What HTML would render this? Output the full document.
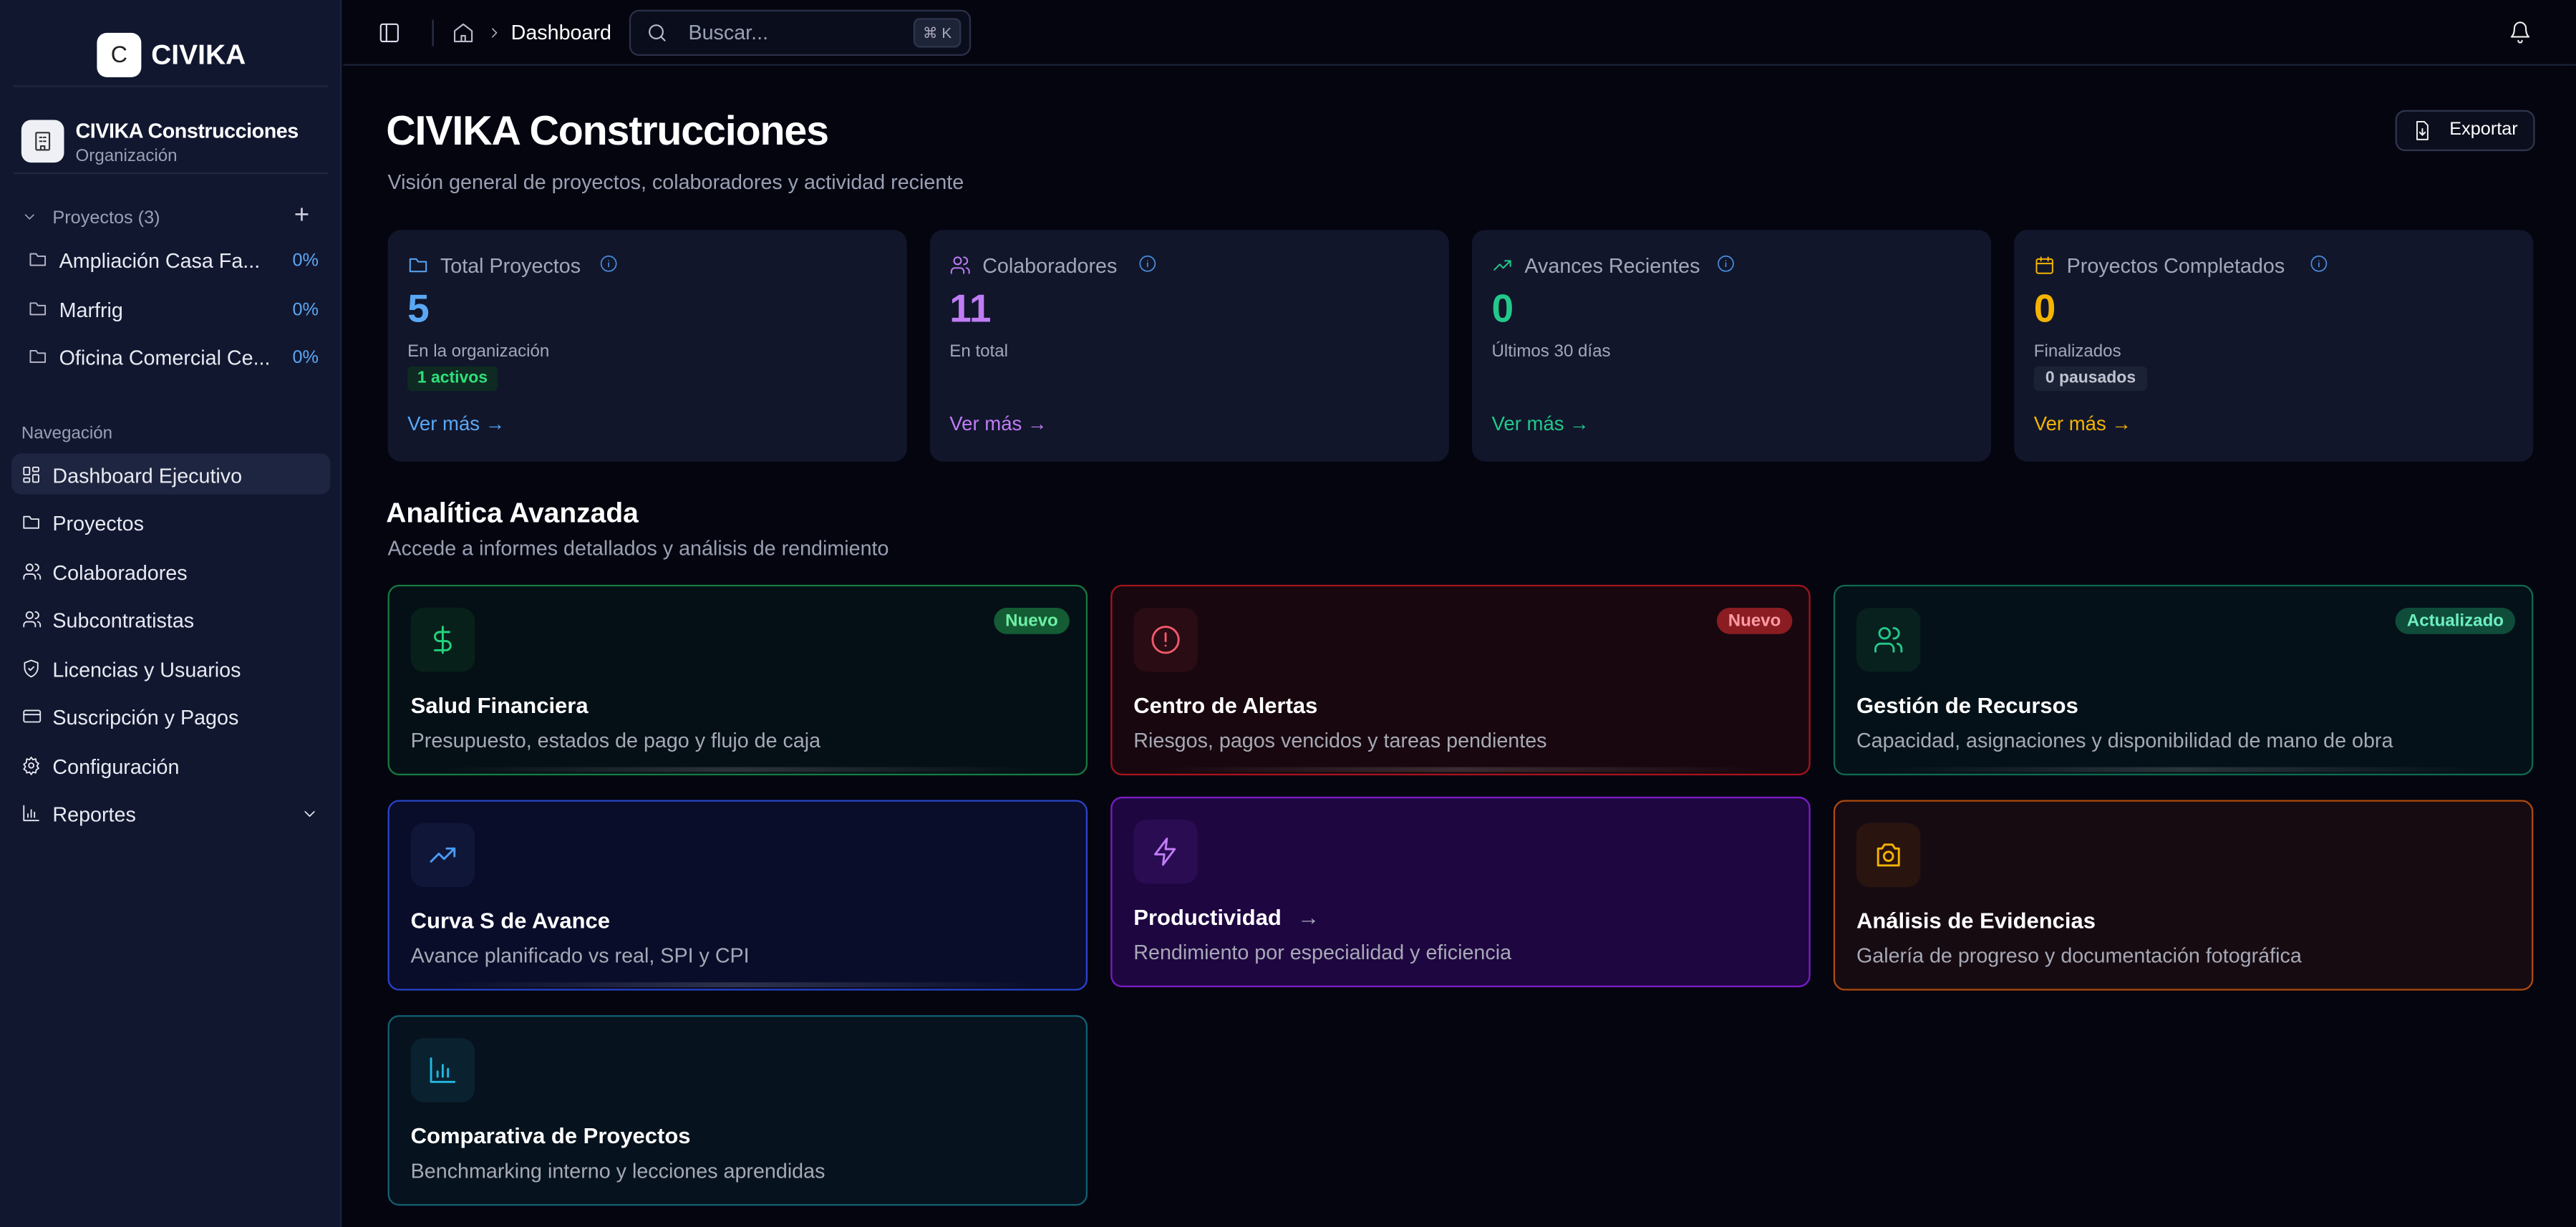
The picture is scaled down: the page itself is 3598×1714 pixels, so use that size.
<!DOCTYPE html>
<html><head><meta charset="utf-8">
<style>
*{box-sizing:border-box;margin:0;padding:0}
html,body{width:3598px;height:1714px;overflow:hidden;background:#04050f}
#w{position:absolute;left:0;top:0;width:1568px;height:747px;transform:scale(2.29464);transform-origin:0 0;font-family:"Liberation Sans",sans-serif;color:#fff;background:#04050f}
.a{position:absolute;white-space:nowrap}
svg{position:absolute;fill:none;stroke-width:1.6;stroke-linecap:round;stroke-linejoin:round}
#sb{position:absolute;left:0;top:0;width:208px;height:747px;background:#121730;border-right:1px solid #1d2340}
.g{color:#9aa0b4}
.sc{position:absolute;top:140px;width:316px;height:141px;background:#11162b;border-radius:8px}
.sc .l{left:32px;top:15px;font-size:12.5px;color:#a3a8b8}
.sc .n{left:12px;top:35px;font-size:24px;font-weight:bold}
.sc .s{left:12px;top:68px;font-size:10.5px;color:#a3a8b8}
.sc .v{left:12px;top:111px;font-size:12px}
.ac{position:absolute;width:426px;height:116px;border-radius:7px;border:1.5px solid}
.ac .ib{position:absolute;left:13px;top:13px;width:39px;height:39px;border-radius:8px}
.ac .t{left:13px;top:65px;font-size:13.5px;font-weight:bold}
.ac .d{left:13px;top:87px;font-size:12.5px;color:#a6a9b6}
.ac .b{right:10px;top:13px;font-size:10.5px;font-weight:bold;padding:2px 7px;border-radius:9px}
.ac .bar{position:absolute;left:30px;right:30px;bottom:1px;height:3px;background:linear-gradient(90deg,transparent,rgba(255,255,255,.15),transparent)}
.ac svg{left:23px;top:23px}
.ni{left:32px;font-size:12.5px;color:#e8eaf2}
</style></head><body><div id="w">
<div id="sb">
 <div class="a" style="left:59px;top:20px;width:27px;height:27px;background:#fff;border-radius:6px;color:#222;font-size:14px;text-align:center;line-height:27px">C</div>
 <div class="a" style="left:92px;top:24px;font-size:17px;font-weight:bold">CIVIKA</div>
 <div class="a" style="left:8px;top:52px;width:192px;height:1px;background:#20263f"></div>
 <div class="a" style="left:13px;top:73px;width:26px;height:26px;background:#eef0f5;border-radius:6px"></div>
 <svg style="left:19px;top:79px" width="14" height="14" viewBox="0 0 24 24" stroke="#333"><rect x="5" y="3" width="14" height="18" rx="1"/><path d="M9 8h2M13 8h2M9 12h2M13 12h2M10 21v-4h4v4"/></svg>
 <div class="a" style="left:46px;top:73px;font-size:12.5px;font-weight:bold;letter-spacing:-0.2px">CIVIKA Construcciones</div>
 <div class="a g" style="left:46px;top:89px;font-size:10.5px">Organización</div>
 <div class="a" style="left:8px;top:105px;width:192px;height:1px;background:#20263f"></div>
 <svg style="left:13px;top:127px" width="10" height="10" viewBox="0 0 24 24" stroke="#aab"><path d="M6 9l6 6 6-6"/></svg>
 <div class="a g" style="left:32px;top:127px;font-size:11px">Proyectos (3)</div>
 <div class="a" style="left:179px;top:123px;font-size:16px;color:#ccd">+</div>
 <svg style="left:17px;top:152px" width="12" height="12" viewBox="0 0 24 24" stroke="#bbc"><path d="M3 6v13h18V8h-9l-2-3H3z"/></svg>
 <div class="a ni" style="left:36px;top:152px;font-size:12.5px">Ampliación Casa Fa...</div>
 <div class="a" style="left:178px;top:153px;font-size:11px;color:#5aa8f5">0%</div>
 <svg style="left:17px;top:182px" width="12" height="12" viewBox="0 0 24 24" stroke="#bbc"><path d="M3 6v13h18V8h-9l-2-3H3z"/></svg>
 <div class="a ni" style="left:36px;top:182px">Marfrig</div>
 <div class="a" style="left:178px;top:183px;font-size:11px;color:#5aa8f5">0%</div>
 <svg style="left:17px;top:211px" width="12" height="12" viewBox="0 0 24 24" stroke="#bbc"><path d="M3 6v13h18V8h-9l-2-3H3z"/></svg>
 <div class="a ni" style="left:36px;top:211px">Oficina Comercial Ce...</div>
 <div class="a" style="left:178px;top:212px;font-size:11px;color:#5aa8f5">0%</div>
 <div class="a g" style="left:13px;top:258px;font-size:10.5px">Navegación</div>
 <div class="a" style="left:7px;top:276px;width:194px;height:25px;background:#1e2540;border-radius:6px"></div>
 <svg style="left:13px;top:283px" width="12" height="12" viewBox="0 0 24 24" stroke="#e8eaf2"><rect x="3" y="3" width="7" height="9" rx="1"/><rect x="14" y="3" width="7" height="5" rx="1"/><rect x="14" y="12" width="7" height="9" rx="1"/><rect x="3" y="16" width="7" height="5" rx="1"/></svg>
 <div class="a ni" style="top:283px">Dashboard Ejecutivo</div>
 <svg style="left:13px;top:312px" width="12" height="12" viewBox="0 0 24 24" stroke="#e8eaf2"><path d="M3 6v13h18V8h-9l-2-3H3z"/></svg>
 <div class="a ni" style="top:312px">Proyectos</div>
 <svg style="left:13px;top:342px" width="13" height="12" viewBox="0 0 24 24" stroke="#e8eaf2"><circle cx="9" cy="7" r="4"/><path d="M2 21v-2a4 4 0 014-4h6a4 4 0 014 4v2M16 3a4 4 0 010 8M22 21v-2a4 4 0 00-3-4"/></svg>
 <div class="a ni" style="top:342px">Colaboradores</div>
 <svg style="left:13px;top:371px" width="13" height="12" viewBox="0 0 24 24" stroke="#e8eaf2"><circle cx="9" cy="7" r="4"/><path d="M2 21v-2a4 4 0 014-4h6a4 4 0 014 4v2M16 3a4 4 0 010 8M22 21v-2a4 4 0 00-3-4"/></svg>
 <div class="a ni" style="top:371px">Subcontratistas</div>
 <svg style="left:13px;top:401px" width="12" height="12" viewBox="0 0 24 24" stroke="#e8eaf2"><path d="M12 2l8 3v6c0 5-3.5 9-8 11-4.5-2-8-6-8-11V5z"/><path d="M9 12l2 2 4-4"/></svg>
 <div class="a ni" style="top:401px">Licencias y Usuarios</div>
 <svg style="left:13px;top:430px" width="13" height="12" viewBox="0 0 24 24" stroke="#e8eaf2"><rect x="2" y="5" width="20" height="14" rx="2"/><path d="M2 10h20"/></svg>
 <div class="a ni" style="top:430px">Suscripción y Pagos</div>
 <svg style="left:13px;top:460px" width="12" height="12" viewBox="0 0 24 24" stroke="#e8eaf2"><circle cx="12" cy="12" r="3"/><path d="M12 2l2 3 3.5-1 .5 3.5 3 2-2 3 2 3-3 2-.5 3.5-3.5-1-2 3-2-3-3.5 1L6 18.5l-3-2 2-3-2-3 3-2L6.5 4 10 5z"/></svg>
 <div class="a ni" style="top:460px">Configuración</div>
 <svg style="left:13px;top:489px" width="12" height="12" viewBox="0 0 24 24" stroke="#e8eaf2"><path d="M3 3v18h18M8 17v-4M12 17V8M16 17v-6"/></svg>
 <div class="a ni" style="top:489px">Reportes</div>
 <svg style="left:183px;top:490px" width="11" height="11" viewBox="0 0 24 24" stroke="#e8eaf2"><path d="M6 9l6 6 6-6"/></svg>
</div>
<div class="a" style="left:209px;top:39px;width:1359px;height:1px;background:#1c2136"></div>
<svg style="left:230px;top:13px" width="14" height="14" viewBox="0 0 24 24" stroke="#dde"><rect x="3" y="3" width="18" height="18" rx="2"/><path d="M9 3v18"/></svg>
<div class="a" style="left:263px;top:12px;width:1px;height:16px;background:#2a3048"></div>
<svg style="left:275px;top:13px" width="14" height="14" viewBox="0 0 24 24" stroke="#bbc"><path d="M3 10l9-7 9 7v11H3z"/><path d="M10 21v-6h4v6"/></svg>
<svg style="left:296px;top:15px" width="10" height="10" viewBox="0 0 24 24" stroke="#bbc"><path d="M9 6l6 6-6 6"/></svg>
<div class="a" style="left:311px;top:13px;font-size:12.5px">Dashboard</div>
<div class="a" style="left:383px;top:6px;width:208px;height:28px;border:1px solid #2a3048;border-radius:6px;background:#0a0d1b"></div>
<svg style="left:393px;top:13px" width="14" height="14" viewBox="0 0 24 24" stroke="#bbc"><circle cx="11" cy="11" r="7"/><path d="M20 20l-4-4"/></svg>
<div class="a g" style="left:419px;top:13px;font-size:12.5px">Buscar...</div>
<div class="a" style="left:556px;top:11px;width:29px;height:18px;background:#1e2438;border:1px solid #2e354c;border-radius:4px;font-size:9px;color:#aab;text-align:center;line-height:16px">⌘ K</div>
<svg style="left:1527px;top:12px" width="14" height="15" viewBox="0 0 24 24" stroke="#eee"><path d="M6 8a6 6 0 0112 0c0 7 3 9 3 9H3s3-2 3-9M10 21a2 2 0 004 0"/></svg>
<div class="a" style="left:235px;top:66px;font-size:25px;font-weight:bold;letter-spacing:-0.5px">CIVIKA Construcciones</div>
<div class="a g" style="left:236px;top:104px;font-size:12.5px">Visión general de proyectos, colaboradores y actividad reciente</div>
<div class="a" style="left:1458px;top:67px;width:85px;height:25px;border:1px solid #2e354c;border-radius:6px;background:#0b0e1c"></div>
<svg style="left:1468px;top:73px" width="13" height="13" viewBox="0 0 24 24" stroke="#eee"><path d="M14 2H6v20h12V6z"/><path d="M12 10v7M9 14l3 3 3-3"/></svg>
<div class="a" style="left:1491px;top:73px;font-size:11px">Exportar</div>
<div class="sc" style="left:236px">
 <svg style="left:12px;top:15px" width="13" height="13" viewBox="0 0 24 24" stroke="#5aa8f5"><path d="M3 6v13h18V8h-9l-2-3H3z"/></svg>
 <div class="a l">Total Proyectos</div>
 <svg style="left:129px;top:15px" width="11" height="11" viewBox="0 0 24 24" stroke="#4a8ee0"><circle cx="12" cy="12" r="10"/><path d="M12 16v-5M12 8h0"/></svg>
 <div class="a n" style="color:#5aa8f5">5</div>
 <div class="a s">En la organización</div>
 <div class="a" style="left:12px;top:83px;font-size:10px;font-weight:bold;color:#2fe07a;background:#0e2a22;padding:2px 6px;border-radius:3px">1 activos</div>
 <div class="a v" style="color:#5aa8f5">Ver más →</div>
</div>
<div class="sc" style="left:566px">
 <svg style="left:12px;top:15px" width="13" height="13" viewBox="0 0 24 24" stroke="#c07cf5"><circle cx="9" cy="7" r="4"/><path d="M2 21v-2a4 4 0 014-4h6a4 4 0 014 4v2M16 3a4 4 0 010 8M22 21v-2a4 4 0 00-3-4"/></svg>
 <div class="a l">Colaboradores</div>
 <svg style="left:127px;top:15px" width="11" height="11" viewBox="0 0 24 24" stroke="#4a8ee0"><circle cx="12" cy="12" r="10"/><path d="M12 16v-5M12 8h0"/></svg>
 <div class="a n" style="color:#c07cf5">11</div>
 <div class="a s">En total</div>
 <div class="a v" style="color:#c07cf5">Ver más →</div>
</div>
<div class="sc" style="left:896px">
 <svg style="left:12px;top:15px" width="13" height="13" viewBox="0 0 24 24" stroke="#22c98a"><path d="M3 17l6-6 4 4 8-8M15 7h6v6"/></svg>
 <div class="a l">Avances Recientes</div>
 <svg style="left:149px;top:15px" width="11" height="11" viewBox="0 0 24 24" stroke="#4a8ee0"><circle cx="12" cy="12" r="10"/><path d="M12 16v-5M12 8h0"/></svg>
 <div class="a n" style="color:#22c98a">0</div>
 <div class="a s">Últimos 30 días</div>
 <div class="a v" style="color:#22c98a">Ver más →</div>
</div>
<div class="sc" style="left:1226px">
 <svg style="left:12px;top:15px" width="13" height="13" viewBox="0 0 24 24" stroke="#f5b400"><rect x="3" y="5" width="18" height="16" rx="2"/><path d="M3 10h18M8 3v4M16 3v4"/></svg>
 <div class="a l">Proyectos Completados</div>
 <svg style="left:180px;top:15px" width="11" height="11" viewBox="0 0 24 24" stroke="#4a8ee0"><circle cx="12" cy="12" r="10"/><path d="M12 16v-5M12 8h0"/></svg>
 <div class="a n" style="color:#f5b400">0</div>
 <div class="a s">Finalizados</div>
 <div class="a" style="left:12px;top:83px;font-size:10px;font-weight:bold;color:#c0c4d0;background:#1c2236;padding:2px 7px;border-radius:3px">0 pausados</div>
 <div class="a v" style="color:#f5b400">Ver más →</div>
</div>
<div class="a" style="left:235px;top:303px;font-size:17px;font-weight:bold">Analítica Avanzada</div>
<div class="a g" style="left:236px;top:327px;font-size:12.5px">Accede a informes detallados y análisis de rendimiento</div>
<div class="ac" style="left:236px;top:356px;border-color:#167a3e;background:#050f16">
 <div class="ib" style="background:#08201a"></div>
 <svg width="19" height="19" viewBox="0 0 24 24" stroke="#22d37f" stroke-width="2"><path d="M12 2v20M17 6H9.5a3.5 3.5 0 000 7h5a3.5 3.5 0 010 7H6"/></svg>
 <div class="a b" style="background:#145c34;color:#6cf0a4">Nuevo</div>
 <div class="a t">Salud Financiera</div><div class="a d">Presupuesto, estados de pago y flujo de caja</div><div class="bar"></div>
</div>
<div class="ac" style="left:676px;top:356px;border-color:#a3141e;background:#18070e">
 <div class="ib" style="background:#2a0c14"></div>
 <svg width="19" height="19" viewBox="0 0 24 24" stroke="#f05a6a" stroke-width="2"><circle cx="12" cy="12" r="10"/><path d="M12 7v6M12 16.5h0"/></svg>
 <div class="a b" style="background:#8a1c22;color:#ff9aa4">Nuevo</div>
 <div class="a t">Centro de Alertas</div><div class="a d">Riesgos, pagos vencidos y tareas pendientes</div><div class="bar"></div>
</div>
<div class="ac" style="left:1116px;top:356px;border-color:#0f6a4e;background:#041118">
 <div class="ib" style="background:#08201e"></div>
 <svg width="19" height="19" viewBox="0 0 24 24" stroke="#22c98a" stroke-width="2"><circle cx="9" cy="7" r="4"/><path d="M2 21v-2a4 4 0 014-4h6a4 4 0 014 4v2M16 3a4 4 0 010 8M22 21v-2a4 4 0 00-3-4"/></svg>
 <div class="a b" style="background:#0f4c3a;color:#6cf0c0">Actualizado</div>
 <div class="a t">Gestión de Recursos</div><div class="a d">Capacidad, asignaciones y disponibilidad de mano de obra</div><div class="bar"></div>
</div>
<div class="ac" style="left:236px;top:487px;border-color:#2a43c8;background:#090d2a">
 <div class="ib" style="background:#0f1638"></div>
 <svg width="19" height="19" viewBox="0 0 24 24" stroke="#4a9af5" stroke-width="2"><path d="M3 17l6-6 4 4 8-8M15 7h6v6"/></svg>
 <div class="a t">Curva S de Avance</div><div class="a d">Avance planificado vs real, SPI y CPI</div><div class="bar"></div>
</div>
<div class="ac" style="left:676px;top:485px;border-color:#7a1cc4;background:#1e0640">
 <div class="ib" style="background:#2a0c52"></div>
 <svg width="19" height="19" viewBox="0 0 24 24" stroke="#c07cf5" stroke-width="2"><path d="M13 2L4 14h7l-1 8 9-12h-7z"/></svg>
 <div class="a t">Productividad <span style="font-weight:normal;color:#aab;margin-left:6px">→</span></div><div class="a d">Rendimiento por especialidad y eficiencia</div>
</div>
<div class="ac" style="left:1116px;top:487px;border-color:#b04a0c;background:#170b12">
 <div class="ib" style="background:#2a1410"></div>
 <svg width="19" height="19" viewBox="0 0 24 24" stroke="#f5b400" stroke-width="2"><path d="M4 7h3l2-3h6l2 3h3v13H4z"/><circle cx="12" cy="13" r="3.5"/></svg>
 <div class="a t">Análisis de Evidencias</div><div class="a d">Galería de progreso y documentación fotográfica</div>
</div>
<div class="ac" style="left:236px;top:618px;border-color:#136073;background:#06121d">
 <div class="ib" style="background:#0a2230"></div>
 <svg width="19" height="19" viewBox="0 0 24 24" stroke="#22b8e0" stroke-width="2"><path d="M3 3v18h18M8 17v-4M12 17V8M16 17v-6"/></svg>
 <div class="a t">Comparativa de Proyectos</div><div class="a d">Benchmarking interno y lecciones aprendidas</div>
</div>
</div></body></html>
